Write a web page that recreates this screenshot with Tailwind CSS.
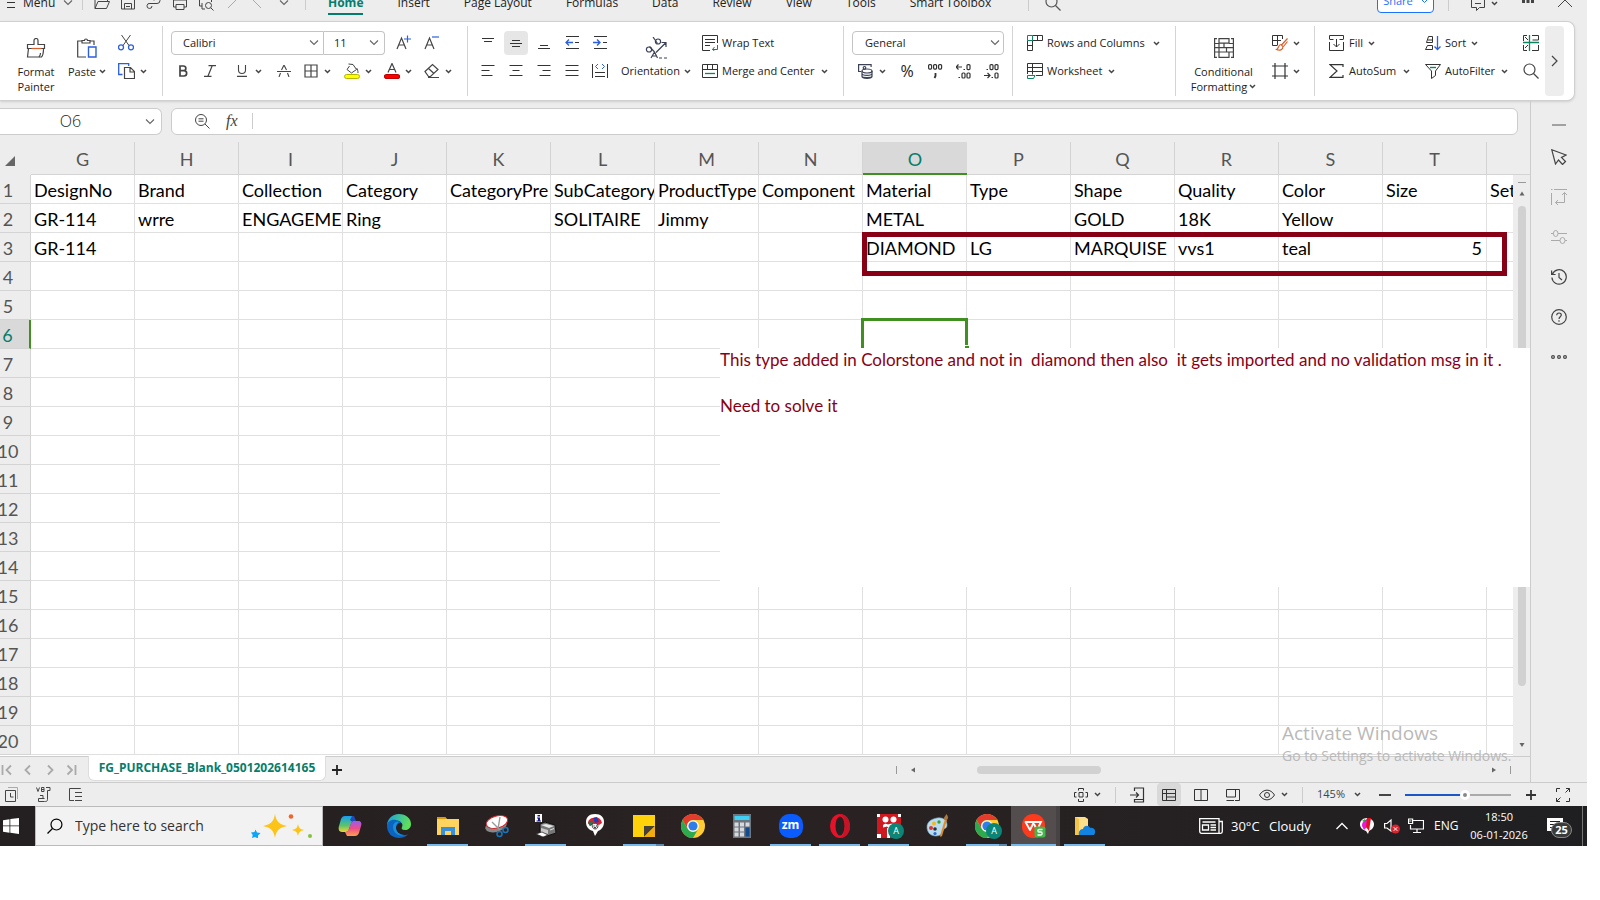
<!DOCTYPE html>
<html lang="en">

<head>
    <meta charset="utf-8">
    <title>FG_PURCHASE_Blank_0501202614165</title>
    <script src="https://cdn.jsdelivr.net/npm/@tailwindcss/browser@4"></script>
</head>

<body class="bg-white font-['Open_Sans',sans-serif] text-[#222] overflow-x-hidden">
    <!-- shared glyphs -->
    <svg class="hidden">
        <symbol id="caret" viewBox="0 0 7 5"><path d="M1 1l2.5 2.5L6 1" fill="none" stroke="#444" stroke-width="1.5"/></symbol>
        <symbol id="chev" viewBox="0 0 10 6"><path d="M1 .5l4 4 4-4" fill="none" stroke="#666" stroke-width="1.1"/></symbol>
        <symbol id="mag" viewBox="0 0 16 16"><circle cx="6.5" cy="6.5" r="5.5" fill="none" stroke="currentColor" stroke-width="1.2"/><path d="M10.5 10.5L15.5 15.5" stroke="currentColor" stroke-width="1.2"/></symbol>
        <symbol id="chrome" viewBox="0 0 24 24">
            <circle cx="12" cy="12" r="12" fill="#fc3"/>
            <path d="M1.6 6A12 12 0 0 1 22.4 6H12a6 6 0 0 0-5.2 9z" fill="#e33b2e"/>
            <path d="M1.6 6A12 12 0 0 0 12 24l5.2-9A6 6 0 0 1 6.8 15z" fill="#2da94f"/>
            <circle cx="12" cy="12" r="5.8" fill="#fff"/><circle cx="12" cy="12" r="4.6" fill="#2f7de9"/>
        </symbol>
    </svg>

    <div class="mr-[13px] bg-[#ededed] flex flex-col">
        <!-- top menu, scrolled half out of view -->
        <header class="h-5 overflow-hidden">
            <div class="-mt-[14px] h-[34px] flex items-center text-xs whitespace-nowrap">
                <button class="flex items-center w-[82px] pl-[7px] shrink-0">
                    <svg class="w-2 h-3 mr-2" viewBox="0 0 8 12" stroke="#333"><path d="M0 1.5h8M0 5.5h8M0 10.5h8"/></svg>Menu
                    <svg class="w-[10px] h-[6px] ml-2"><use href="#chev"/></svg>
                </button>
                <span class="w-px h-[14px] bg-[#ccc]"></span>
                <div class="flex w-[222px] shrink-0 pl-[7px] gap-[2px] text-[#444]">
                    <button class="w-6 flex justify-center" aria-label="Open"><svg class="w-4 h-4" viewBox="0 0 16 16" fill="none" stroke="currentColor"><path d="M1 13.5V2.5h5l1.5 2h6v2M1 13.5l3-7h11.5l-3 7z"/></svg></button>
                    <button class="w-6 flex justify-center" aria-label="Save"><svg class="w-4 h-4" viewBox="0 0 16 16" fill="none" stroke="currentColor"><path d="M1.5 1.5h10l3 3v9.500h-13zM4.500 14V8.500h7V14M6 11.500h4"/></svg></button>
                    <button class="w-6 flex justify-center" aria-label="Export"><svg class="w-4 h-4" viewBox="0 0 16 16" fill="none" stroke="currentColor"><path d="M6 11a2.500 2.500 0 1 1-2-2.500h7a3 3 0 1 0-3-3"/></svg></button>
                    <button class="w-6 flex justify-center" aria-label="Print"><svg class="w-4 h-4" viewBox="0 0 16 16" fill="none" stroke="currentColor"><path d="M4 5V1.500h8V5M4 12H1.500V5h13v7H12M4 9.500h8v5H4z"/></svg></button>
                    <button class="w-6 flex justify-center" aria-label="Preview"><svg class="w-4 h-4" viewBox="0 0 16 16" fill="none" stroke="currentColor"><path d="M4 11H1.500V4h12v3M4 4V1h7v3M4 8v6h3"/><circle cx="10.500" cy="10.500" r="3"/><path d="M12.800 12.800l2.700 2.700"/></svg></button>
                    <button class="w-6 flex justify-center text-[#aaa]" aria-label="Undo"><svg class="w-4 h-4" viewBox="0 0 16 16" fill="none" stroke="currentColor"><path d="M4 13l8-8c0-2-2-4-5-4"/></svg></button>
                    <button class="w-6 flex justify-center text-[#aaa]" aria-label="Redo"><svg class="w-4 h-4" viewBox="0 0 16 16" fill="none" stroke="currentColor"><path d="M11 13L3 5c0-2 2-4 5-4"/></svg></button>
                    <button class="w-6 flex items-center justify-center" aria-label="More"><svg class="w-[10px] h-[6px]"><use href="#chev"/></svg></button>
                </div>
                <span class="w-px h-[14px] bg-[#ccc]"></span>
                <nav class="flex gap-[34px] pl-[22px] w-[722px] shrink-0 self-stretch items-center">
                    <a href="#" class="font-bold text-[#047d6c] self-stretch flex items-center border-b-2 border-[#047d6c] mb-[5px] pt-[7px]">Home</a>
                    <a href="#">Insert</a><a href="#">Page Layout</a><a href="#">Formulas</a><a href="#">Data</a><a href="#">Review</a><a href="#">View</a><a href="#">Tools</a><a href="#">Smart Toolbox</a>
                </nav>
                <span class="w-px h-[16px] bg-[#ccc]"></span>
                <button class="ml-4" aria-label="Search"><svg class="w-4 h-4 text-[#555]"><use href="#mag"/></svg></button>
                <div class="ml-auto flex items-center">
                    <button class="h-6 w-[57px] -mt-1 border border-[#1a73ff] rounded bg-white text-[#1a73ff] text-[11px] flex items-center justify-center gap-2">Share<svg class="w-[7px] h-[5px]" viewBox="0 0 7 5"><path d="M1 1l2.500 2.500L6 1" fill="none" stroke="#1a73ff"/></svg></button>
                    <span class="w-px h-[16px] bg-[#ccc] ml-[14px]"></span>
                    <button class="ml-[22px] flex items-center gap-[5px]" aria-label="Comments"><svg class="w-[15px] h-[15px]" viewBox="0 0 15 15" fill="none" stroke="#444"><path d="M.500 1h13v10.500h-5l-3 3v-3h-5zM4 7.500h6"/></svg><svg class="w-[7px] h-[5px]"><use href="#caret"/></svg></button>
                    <button class="ml-6 w-4" aria-label="More"><svg class="w-3 h-3" viewBox="0 0 12 12" fill="#444"><path d="M0 3h3v3H0zM4.500 3h3v3h-3zM9 3h3v3H9z"/></svg></button>
                    <button class="ml-5 mr-[15px]" aria-label="Collapse"><svg class="w-[14px] h-[14px]" viewBox="0 0 14 14" fill="none" stroke="#444"><path d="M0 11l7-7 7 7"/></svg></button>
                </div>
            </div>
        </header>

        <!-- ribbon -->
        <section class="mt-px mr-3 h-[80px] bg-white border-y border-r border-[#d0d0d0] rounded-r-lg shadow-sm flex text-[11px] whitespace-nowrap text-[#222]">
            <div class="w-[163px] shrink-0 my-1 border-r border-[#d4d4d4] flex pl-[10px]">
                <button class="w-[52px] h-[70px] pt-3 flex flex-col items-center leading-[15px]">
                    <svg class="w-5 h-5 shrink-0 mb-[6px]" viewBox="0 0 20 20" fill="none" stroke="#444" stroke-width="1.200"><path d="M8 6.500V2.500a2 2 0 0 1 4 0v4h6.500v4H1.500v-4zM2.500 10.500L1.500 19h14c1.500-1.500 2-4 2-8.500"/><path d="M5.500 10.500h10" stroke="#d9602b"/><path d="M13 19c1-1 1.500-2.500 1.500-4"/></svg>
                    <span>Format</span><span>Painter</span>
                </button>
                <button class="w-[50px] h-[70px] pt-3 flex flex-col items-center leading-[15px]">
                    <svg class="w-5 h-5 shrink-0 mb-[6px]" viewBox="0 0 20 20" fill="none" stroke="#444" stroke-width="1.200"><path d="M9 19H.700V3H5M13 3h4v4M5 5V2.500h2.500a1.500 1.500 0 0 1 3 0H13V5z"/><path d="M11.500 9h7.500v10h-7.500z" stroke="#2b5fe0" stroke-width="1.400"/></svg>
                    <span class="flex items-center gap-[3px]">Paste<svg class="w-[7px] h-[5px]"><use href="#caret"/></svg></span>
                </button>
                <div class="pt-[3px] pl-[6px]">
                    <button class="h-7 flex items-center" aria-label="Cut"><svg class="w-4 h-4" viewBox="0 0 16 16" fill="none" stroke="#444"><path d="M3.500 0l7.500 10.500M12.500 0L5 10.500"/><g stroke="#2b5fe0" stroke-width="1.300"><circle cx="3" cy="12.300" r="2.500"/><circle cx="13" cy="12.300" r="2.500"/></g></svg></button>
                    <button class="h-7 flex items-center gap-[5px]" aria-label="Copy"><svg class="w-[17px] h-4" viewBox="0 0 17 16" fill="none"><path d="M4.500 11.500H.700V.700h10V3" stroke="#2b5fe0" stroke-width="1.300"/><path d="M6.500 4.500h6l4 4v7h-10zM12 4.500V9h4.500" stroke="#444" stroke-width="1.200"/></svg><svg class="w-[7px] h-[5px]"><use href="#caret"/></svg></button>
                </div>
            </div>
            <div class="w-[305px] shrink-0 my-1 border-r border-[#d4d4d4] pl-2 pt-[3px]">
                <div class="flex items-center h-7">
                    <div class="relative w-[153px]"><select aria-label="Font" class="appearance-none w-full h-6 border border-[#c4c4c4] rounded-l bg-white pl-[11px] text-[11px]"><option>Calibri</option></select><svg class="absolute right-[5px] top-[9px] w-[10px] h-[6px] pointer-events-none"><use href="#chev"/></svg></div>
                    <div class="relative w-[61px]"><select aria-label="Font size" class="appearance-none w-full h-6 border border-l-0 border-[#c4c4c4] rounded-r bg-white pl-[10px] text-[11px]"><option>11</option></select><svg class="absolute right-[6px] top-[9px] w-[10px] h-[6px] pointer-events-none"><use href="#chev"/></svg></div>
                    <button class="w-7 ml-1 flex justify-center" aria-label="Grow font"><svg class="w-[15px] h-4" viewBox="0 0 15 16" fill="none" stroke="#444" stroke-width="1.200"><path d="M1 14L5.500 3 10 14M2.500 10h6"/><path d="M8 4h7M11.500.500v7" stroke="#2b5fe0"/></svg></button>
                    <button class="w-7 flex justify-center" aria-label="Shrink font"><svg class="w-[15px] h-4" viewBox="0 0 15 16" fill="none" stroke="#444" stroke-width="1.200"><path d="M1 14L5.500 3 10 14M2.500 10h6"/><path d="M8 2h7" stroke="#2b5fe0"/></svg></button>
                </div>
                <div class="flex items-center h-7">
                    <button class="w-6 flex justify-center" aria-label="Bold"><svg class="w-3 h-3" viewBox="0 0 12 12" fill="none" stroke="#444" stroke-width="1.700"><path d="M3 1h3.500a2.300 2.300 0 0 1 0 4.700H3zM3 5.700h4a2.600 2.600 0 0 1 0 5.300H3z"/></svg></button>
                    <button class="w-[30px] flex justify-center" aria-label="Italic"><svg class="w-3 h-3" viewBox="0 0 12 12" fill="none" stroke="#444" stroke-width="1.200"><path d="M4.500.600H12M0 11.400h7.500M8.300.600l-4.500 11"/></svg></button>
                    <button class="w-12 flex items-center justify-center gap-2" aria-label="Underline"><svg class="w-[10px] h-3" viewBox="0 0 10 12" fill="none" stroke="#444" stroke-width="1.100"><path d="M1.500 0v5a3.500 3.500 0 0 0 7 0V0M0 11.400h10"/></svg><svg class="w-[7px] h-[5px]"><use href="#caret"/></svg></button>
                    <button class="w-[22px] flex justify-center" aria-label="Strikethrough"><svg class="w-[14px] h-3" viewBox="0 0 14 12" fill="none" stroke="#444" stroke-width="1.100"><path d="M0 6.500h14M4.500 5L7 0l2.500 5M3.500 8L2 12M10.500 8l1.500 4"/></svg></button>
                    <button class="w-[43px] flex items-center justify-center gap-[5px]" aria-label="Borders"><svg class="w-4 h-4" viewBox="0 0 16 16" fill="none" stroke="#444" stroke-width="1.200"><path d="M2 2h12v12H2zM8 2v12M2 8h12"/></svg><svg class="w-[7px] h-[5px]"><use href="#caret"/></svg></button>
                    <button class="w-10 flex items-center justify-center gap-[5px]" aria-label="Fill colour"><svg class="w-4 h-4" viewBox="0 0 16 16" fill="none" stroke="#444"><path d="M5.500 3L3 6.500 7.500 10l5-3.500L9 1.500 4.500 1M12.500 5c1 1 1.500 3 1.500 5"/><rect x=".500" y="11.500" width="15" height="4" rx="2" fill="#ff0" stroke="#b5b500"/></svg><svg class="w-[7px] h-[5px]"><use href="#caret"/></svg></button>
                    <button class="w-10 flex items-center justify-center gap-[5px]" aria-label="Font colour"><svg class="w-4 h-4" viewBox="0 0 16 16" fill="none" stroke="#444" stroke-width="1.200"><path d="M4 9.500L8 .500l4 9M5.500 6.500h5"/><rect x=".500" y="11.500" width="15" height="4" rx="2" fill="red" stroke="#c00000"/></svg><svg class="w-[7px] h-[5px]"><use href="#caret"/></svg></button>
                    <button class="w-10 flex items-center justify-center gap-[5px]" aria-label="Clear"><svg class="w-4 h-4" viewBox="0 0 16 16" fill="none" stroke="#444" stroke-width="1.200"><path d="M1 8.500L8.500 1.500l5.500 5-7.500 7H4.500zM4.500 5.500l5.500 5M4 14.500h11"/></svg><svg class="w-[7px] h-[5px]"><use href="#caret"/></svg></button>
                </div>
            </div>
            <div class="w-[376px] shrink-0 my-1 border-r border-[#d4d4d4] flex pl-[6px] pt-[3px]">
                <div class="w-[140px]">
                    <div class="flex h-7 items-center">
                        <button class="w-7 h-6 flex items-center justify-center" aria-label="Top"><svg class="w-[14px] h-[14px]" viewBox="0 0 14 14" stroke="#333"><path d="M1 2.500h12M3 5.500h8" /></svg></button>
                        <button class="w-7 h-6 flex items-center justify-center" aria-label="Middle"><span class="w-6 h-6 rounded bg-[#e6e6e6] flex items-center justify-center"><svg class="w-[14px] h-[14px]" viewBox="0 0 14 14" stroke="#333"><path d="M3 4.500h8M1 7.500h12M3 10.500h8"/></svg></span></button>
                        <button class="w-7 h-6 flex items-center justify-center" aria-label="Bottom"><svg class="w-[14px] h-[14px]" viewBox="0 0 14 14" stroke="#333"><path d="M3 9.500h8M1 12.500h12"/></svg></button>
                        <button class="w-7 h-6 flex items-center justify-center" aria-label="Decrease indent"><svg class="w-[14px] h-[14px]" viewBox="0 0 14 14" fill="none" stroke="#333"><path d="M1 .500h13M1 12.500h13M10 6.500h4"/><path d="M8 6.500H1M4 3.500l-3 3 3 3" stroke="#2b5fe0" stroke-width="1.300"/></svg></button>
                        <button class="w-7 h-6 flex items-center justify-center" aria-label="Increase indent"><svg class="w-[14px] h-[14px]" viewBox="0 0 14 14" fill="none" stroke="#333"><path d="M1 .500h13M1 12.500h13M10 6.500h4"/><path d="M0 6.500h7M4 3.500l3 3-3 3" stroke="#2b5fe0" stroke-width="1.300"/></svg></button>
                    </div>
                    <div class="flex h-7 items-center">
                        <button class="w-7 flex justify-center" aria-label="Left"><svg class="w-[14px] h-[14px]" viewBox="0 0 14 14" stroke="#333"><path d="M.500 1.500h13M.500 6.500h8M.500 11.500h11"/></svg></button>
                        <button class="w-7 flex justify-center" aria-label="Center"><svg class="w-[14px] h-[14px]" viewBox="0 0 14 14" stroke="#333"><path d="M.500 1.500h13M3.500 6.500h7M.500 11.500h13"/></svg></button>
                        <button class="w-7 flex justify-center" aria-label="Right"><svg class="w-[14px] h-[14px]" viewBox="0 0 14 14" stroke="#333"><path d="M.500 1.500h13M5.500 6.500h8M2.500 11.500h11"/></svg></button>
                        <button class="w-7 flex justify-center" aria-label="Justify"><svg class="w-[14px] h-[14px]" viewBox="0 0 14 14" stroke="#333"><path d="M.500 1.500h13M.500 6.500h13M.500 11.500h13"/></svg></button>
                        <button class="w-7 flex justify-center" aria-label="Distribute"><svg class="w-4 h-[14px]" viewBox="0 0 16 14" fill="none" stroke="#333"><path d="M.500 0v14M15.500 0v14M3 8.500h10M3 12.500h10"/><path d="M6 0L3.500 2.500 6 5M10 0l2.500 2.500L10 5" stroke="#2b5fe0"/></svg></button>
                    </div>
                </div>
                <button class="w-[84px] pt-2 flex flex-col items-center" aria-label="Orientation">
                    <svg class="w-[22px] h-[22px] shrink-0" viewBox="0 0 22 22" fill="none" stroke="#3b4256" stroke-width="1.200"><ellipse cx="4" cy="12.500" rx="2.600" ry="2.500"/><path d="M4.500 9.500l4.500 5"/><ellipse cx="13" cy="4.500" rx="2.600" ry="2.500"/><path d="M8 0l4.500 6.500"/><path d="M11 15.500L20.500 6M16.500 5.500h4.500v4.500M6 21l3.500-6 3 6M7.500 19h4M14 21h3M19 21h3"/></svg>
                    <span class="flex items-center gap-1 mt-1">Orientation<svg class="w-[7px] h-[5px]"><use href="#caret"/></svg></span>
                </button>
                <div class="pl-1">
                    <button class="h-7 flex items-center gap-1"><svg class="w-4 h-4" viewBox="0 0 16 16" fill="none" stroke="#333"><path d="M8 15.500H.500V.500h15V8M3 4.500h10M3 7.500h10M3 10.500h5"/><path d="M15.500 10v4.500H10.500M12.500 12l-2 2.500 2 1.500" stroke="#0a8560"/></svg>Wrap Text</button>
                    <button class="h-7 flex items-center gap-1"><svg class="w-4 h-[14px]" viewBox="0 0 16 14" fill="none" stroke="#333"><path d="M.500.500h15v13H.500zM.500 5.500h15M5.500.500v5M10.500.500v5"/><path d="M3 9.500h10" stroke="#0a8560" stroke-width="1.300"/></svg>Merge and Center<svg class="w-[7px] h-[5px] ml-[3px]"><use href="#caret"/></svg></button>
                </div>
            </div>
            <div class="w-[169px] shrink-0 my-1 border-r border-[#d4d4d4] pl-2 pt-[3px]">
                <div class="flex items-center h-7"><div class="relative w-[152px]"><select aria-label="Number format" class="appearance-none w-full h-6 border border-[#c4c4c4] rounded bg-white pl-[12px] text-[11px]"><option>General</option></select><svg class="absolute right-1 top-[9px] w-[10px] h-[6px] pointer-events-none"><use href="#chev"/></svg></div></div>
                <div class="flex items-center h-7 pl-1">
                    <button class="w-[37px] flex items-center gap-[6px] pl-[2px]" aria-label="Currency"><svg class="w-[15px] h-[15px]" viewBox="0 0 15 15" fill="none" stroke="#3b4256" stroke-width="1.200"><path d="M3 7.500H.600V.600h12.500v2.500"/><circle cx="6.500" cy="3.800" r="1.300"/><ellipse cx="9" cy="7" rx="5" ry="2"/><path d="M4 7v5.500c0 2.500 10 2.500 10 0V7M4 9.500c0 2.500 10 2.500 10 0M4 12c0 2 10 2 10 0"/></svg><svg class="w-[7px] h-[5px]"><use href="#caret"/></svg></button>
                    <button class="w-7 text-base leading-4">%</button>
                    <button class="w-7 flex justify-center" aria-label="Thousands"><svg class="w-[15px] h-[15px]" viewBox="0 0 15 15" fill="none" stroke="#333" stroke-width="1.200"><rect x=".600" y=".600" width="3" height="4.500" rx="1"/><rect x="5.600" y=".600" width="3" height="4.500" rx="1"/><rect x="10.600" y=".600" width="3" height="4.500" rx="1"/><path d="M7.500 9v3l-1 2" stroke-width="1.800"/></svg></button>
                    <button class="w-7 flex justify-center" aria-label="Increase decimal"><svg class="w-[15px] h-[15px]" viewBox="0 0 15 15" fill="none" stroke="#333" stroke-width="1.200"><rect x="11" y=".600" width="3" height="5" rx="1"/><rect x="6" y="9" width="3" height="5" rx="1"/><rect x="11" y="9" width="3" height="5" rx="1"/><path d="M0 3h6M2.500.500L0 3l2.500 2.500M7.500 5.500h1.500M2.500 13.500H4"/></svg></button>
                    <button class="w-7 flex justify-center" aria-label="Decrease decimal"><svg class="w-[15px] h-[15px]" viewBox="0 0 15 15" fill="none" stroke="#333" stroke-width="1.200"><rect x="6" y=".600" width="3" height="5" rx="1"/><rect x="11" y=".600" width="3" height="5" rx="1"/><rect x="11" y="9" width="3" height="5" rx="1"/><path d="M0 11.500h6M3.500 9L6 11.500 3.500 14M7.500 13.500H9M2.500 5.500H4"/></svg></button>
                </div>
            </div>
            <div class="w-[163px] shrink-0 my-1 border-r border-[#d4d4d4] pl-[14px] pt-[3px]">
                <button class="h-7 flex items-center gap-1"><svg class="w-4 h-4" viewBox="0 0 16 16" fill="none" stroke="#333"><path d="M5.500.500h10v5h-10M10.500.500v5M.500 5.500v10h5v-10M.500 10.500h5"/><path d="M.500.500h5v5h-5z" stroke="#0a8560"/></svg>Rows and Columns<svg class="w-[7px] h-[5px] ml-1"><use href="#caret"/></svg></button>
                <button class="h-7 flex items-center gap-1"><svg class="w-4 h-4" viewBox="0 0 16 16" fill="none" stroke="#333"><path d="M.500 11V.500h15v12H9M.500 4.500h15M5.500.500v11M.500 8.500h15"/><path d="M.500 12.500H8L6.500 15.500h-6z" stroke="#0a8560"/></svg>Worksheet<svg class="w-[7px] h-[5px] ml-[2px]"><use href="#caret"/></svg></button>
            </div>
            <div class="w-[139px] shrink-0 my-1 border-r border-[#d4d4d4] flex pl-[8px]">
                <button class="w-[79px] h-[70px] pt-3 flex flex-col items-center leading-[15px]">
                    <svg class="w-5 h-5 shrink-0 mb-[6px]" viewBox="0 0 20 20" fill="none" stroke="#444" stroke-width="1.200"><path d="M3 .600H.600v18.800H3M17 .600h2.400v18.800H17M5 .600h10v4.500H5zM5 14h10v5.400H5zM.600 5.500H5M.600 9.700h18.800M.600 14H5M15 5.500h4.400M15 14h4.400M5 5v9M10 5v5M12.500 10v4"/></svg>
                    <span>Conditional</span><span class="flex items-center gap-[2px]">Formatting<svg class="w-[7px] h-[5px]"><use href="#caret"/></svg></span>
                </button>
                <div class="pt-[3px] pl-[9px]">
                    <button class="h-7 flex items-center gap-[5px]" aria-label="Table style"><svg class="w-4 h-4" viewBox="0 0 16 16" fill="none" stroke="#333"><path d="M5 10.500H.500V.500h10V4M.500 5.500H9M5.500.500v10"/><path d="M15.500 3.500l-6 6.500M15.500 6.500l-4 5M9 9.500c-3 0-2 4-4.500 5 3 1.500 6.500.500 6.500-3z" stroke="#d9602b" stroke-width="1.200"/></svg><svg class="w-[7px] h-[5px]"><use href="#caret"/></svg></button>
                    <button class="h-7 flex items-center gap-[5px]" aria-label="Cell style"><svg class="w-4 h-4" viewBox="0 0 16 16" fill="none" stroke="#333" stroke-width="1.200"><path d="M0 3h16M0 13h16M3 0v16M13 0v16"/></svg><svg class="w-[7px] h-[5px]"><use href="#caret"/></svg></button>
                </div>
            </div>
            <div class="my-1 flex pl-[14px] pt-[3px] grow">
                <div class="w-24">
                    <button class="h-7 flex items-center gap-[5px]"><svg class="w-[15px] h-4" viewBox="0 0 15 16" fill="none" stroke="#333"><path d="M.500 4V.500h14V4M.500 4.500h4M10.500 4.500h4M.500 7v8.500h14V7M7.500 4v8M4.500 9l3 3 3-3"/></svg>Fill<svg class="w-[7px] h-[5px]"><use href="#caret"/></svg></button>
                    <button class="h-7 flex items-center gap-[5px]"><svg class="w-[15px] h-4" viewBox="0 0 15 16" fill="none" stroke="#333" stroke-width="1.200"><path d="M14 4V1.600H1L8 8l-7 6.400h13V12"/></svg>AutoSum<svg class="w-[7px] h-[5px] ml-[2px]"><use href="#caret"/></svg></button>
                </div>
                <div class="w-[98px]">
                    <button class="h-7 flex items-center gap-1"><svg class="w-4 h-4" viewBox="0 0 16 16" fill="none" stroke="#333"><path d="M3.500 1.500h4v6h-6zM.500 14.500l2-4h5v4zM3 5h4.500"/><path d="M12.500 1v13.500M9.500 11.500l3 3 3-3" stroke="#2b5fe0" stroke-width="1.300"/></svg>Sort<svg class="w-[7px] h-[5px] ml-px"><use href="#caret"/></svg></button>
                    <button class="h-7 flex items-center gap-1"><svg class="w-4 h-4" viewBox="0 0 16 16" fill="none" stroke="#333"><path d="M.500 1.500h15L10.500 8v4.500l-4 3V8z"/><path d="M5 4.500h6" stroke="#0a8560" stroke-width="1.400"/></svg>AutoFilter<svg class="w-[7px] h-[5px] ml-[2px]"><use href="#caret"/></svg></button>
                </div>
                <div>
                    <button class="h-7 flex items-center" aria-label="Freeze"><svg class="w-4 h-4" viewBox="0 0 16 16" fill="none" stroke="#333"><path d="M4 .500H.500V6M9 .500h6.500V5h-6M.500 10v5.500H4M9 15.500h6.500V10M2 2l3 3M2 13l3-3"/><path d="M6.500 0v16M0 7.500h16" stroke="#0a8560" stroke-width="1.300"/></svg></button>
                    <button class="h-7 flex items-center" aria-label="Find"><svg class="w-4 h-4 text-[#444]"><use href="#mag"/></svg></button>
                </div>
            </div>
            <button class="w-[19px] my-1 mr-[10px] bg-[#ededed] rounded flex items-center justify-center" aria-label="Scroll ribbon"><svg class="w-[7px] h-3" viewBox="0 0 7 12" fill="none" stroke="#444" stroke-width="1.200"><path d="M1 1l5 5-5 5"/></svg></button>
        </section>

        <main class="flex">
            <div class="grow min-w-0">
                <!-- name box and formula bar -->
                <div class="h-[41px] pr-3 pb-px flex items-center gap-[9px]">
                    <div class="relative w-[162px] shrink-0">
                        <input aria-label="Name box" value="O6" class="w-full h-[27px] bg-white border border-l-0 border-[#ccc] rounded-r-md text-center text-base pr-5 font-['Open_Sans',sans-serif] font-light">
                        <svg class="absolute right-[7px] top-[11px] w-[10px] h-[6px] pointer-events-none"><use href="#chev"/></svg>
                    </div>
                    <div class="grow h-[27px] bg-white border border-[#ccc] rounded-md flex items-center pl-[23px] text-[#444]">
                        <svg class="w-[15px] h-[15px]" viewBox="0 0 15 15" fill="none" stroke="currentColor"><circle cx="6" cy="6" r="5.500"/><path d="M10 10l4.500 4.500M3.500 4.800h5M3.500 7.200h5"/></svg>
                        <span class="ml-4 w-[18px] text-base italic font-['Liberation_Serif',serif]">fx</span>
                        <span class="w-px h-4 bg-[#ccc] ml-[8px]"></span>
                        <input aria-label="Formula" class="grow h-5 px-2 text-sm outline-none">
                    </div>
                </div>

                <!-- sheet -->
                <div class="relative h-[614px] flex overflow-hidden">
                    <div class="grow min-w-0 overflow-hidden bg-white">
                        <table class="-ml-[14px] w-[1605px] table-fixed border-separate border-spacing-0 font-['Lato',sans-serif] text-[18px] leading-6 text-black">
                            <thead><tr id="cols"></tr></thead>
                            <tbody id="rows"></tbody>
                        </table>
                    </div>
                    <div class="w-[17px] shrink-0 pt-[33px] flex flex-col items-center">
                        <div class="absolute top-0 right-0 w-[17px] h-[33px] bg-[#ededed] border-b border-[#d4d4d4]"></div>
                        <svg class="w-2 h-7" viewBox="0 0 8 28"><path d="M0 7.500h8" stroke="#999"/><path d="M1.500 20.500L4 16.500l2.500 4z" fill="#666"/></svg>
                        <div class="w-2 h-[480px] mt-[3px] rounded bg-[#d1d1d1]"></div>
                        <svg class="w-2 h-2 mt-auto mb-[7px]" viewBox="0 0 8 8"><path d="M1.500 2L4 6l2.500-4z" fill="#666"/></svg>
                    </div>
                    <div class="absolute left-[862px] top-[90px] w-[645px] h-[44px] border-[5px] border-[#880015]"></div>
                    <div class="absolute left-[720px] right-0 top-[206px] h-[239px] bg-white text-[#880015] font-['Lato',sans-serif] text-[17px] leading-[23px] whitespace-pre overflow-hidden"><p>This type added in Colorstone and not in  diamond then also  it gets imported and no validation msg in it .</p><br><p>Need to solve it</p></div>
                    <p class="absolute left-[1282px] top-[579px] text-[#b9b9b9] text-[19px] leading-6 z-10 whitespace-nowrap pointer-events-none">Activate Windows</p>
                </div>

                <!-- sheet tabs -->
                <div class="relative h-[26px] border-t border-[#ccc] flex items-center text-[#aaa]">
                    <div class="w-[88px] shrink-0 flex items-center">
                        <svg class="w-[88px] h-4" viewBox="0 0 88 16" fill="none" stroke="#aaa" stroke-width="1.800"><path d="M2.500 3v10M11 3.500L6.500 8l4.500 4.500M30 3.500L25.500 8l4.500 4.500M48 3.500L52.500 8 48 12.500M67.500 3.500L72 8l-4.500 4.500M75.500 3v10"/></svg>
                    </div>
                    <button class="h-[25px] -mt-px w-[238px] self-start bg-white border border-t-0 border-[#ddd] rounded-b-md font-bold text-xs text-[#047d6c] whitespace-nowrap">FG_PURCHASE_Blank_0501202614165</button>
                    <button class="ml-[6px]" aria-label="New sheet"><svg class="w-[10px] h-[10px]" viewBox="0 0 10 10" stroke="#222" stroke-width="1.800"><path d="M5 0v10M0 5h10"/></svg></button>
                    <div class="ml-auto mr-[19px] flex items-center">
                        <span class="w-px h-2 bg-[#999]"></span>
                        <svg class="w-2 h-2 ml-3" viewBox="0 0 8 8"><path d="M6 1.500L2 4l4 2.500z" fill="#666"/></svg>
                        <span class="w-[124px] h-2 rounded bg-[#d1d1d1] ml-[60px] mr-[389px]"></span>
                        <svg class="w-2 h-2 mr-3" viewBox="0 0 8 8"><path d="M2 1.500L6 4 2 6.500z" fill="#666"/></svg>
                        <span class="w-px h-2 bg-[#999]"></span>
                    </div>
                    <p class="absolute left-[1282px] -top-[11px] text-[#b9b9b9] text-sm leading-5 whitespace-nowrap pointer-events-none z-10">Go to Settings to activate Windows.</p>
                </div>
            </div>

            <!-- side tools -->
            <aside class="w-[57px] shrink-0 border-l border-[#ccc] flex flex-col items-center text-[#444]">
                <button class="h-8 mt-2" aria-label="Collapse panel"><svg class="w-4 h-4" viewBox="0 0 16 16"><path d="M1 8h14" stroke="#999" stroke-width="1.800"/></svg></button>
                <button class="h-8 mb-1" aria-label="Select"><svg class="w-4 h-4" viewBox="0 0 16 16" fill="none" stroke="currentColor" stroke-width="1.200"><path d="M.800.800L4.500 15l3-4 4 4.500 3-3-4-4 4.500-2.500z"/></svg></button>
                <button class="h-10 text-[#aaa]" aria-label="Crop"><svg class="w-4 h-4" viewBox="0 0 16 16" fill="none" stroke="currentColor"><path d="M.500 4v12M3 .500h13M0 .500h1.500M13.500 3.500v10h-9M11 6l2.500-2.500L16 6M7 11l-2.500 2.500L7 16"/></svg></button>
                <button class="h-10 text-[#aaa]" aria-label="Settings"><svg class="w-4 h-4" viewBox="0 0 16 16" fill="none" stroke="currentColor"><path d="M0 4.500h2.500M7 4.500h9M0 11.500h9M14 11.500h2"/><ellipse cx="4.700" cy="4.500" rx="2.300" ry="3"/><ellipse cx="11.500" cy="11.500" rx="2.500" ry="3"/></svg></button>
                <button class="h-10" aria-label="History"><svg class="w-4 h-4" viewBox="0 0 16 16" fill="none" stroke="currentColor" stroke-width="1.200"><path d="M1.500 5A7.200 7.200 0 1 1 .900 8.500M.600 1.500V5.500h4M8 4v4.500l3 2.500"/></svg></button>
                <button class="h-10" aria-label="Help"><svg class="w-4 h-4" viewBox="0 0 16 16" fill="none" stroke="currentColor" stroke-width="1.200"><circle cx="8" cy="8" r="7.300"/><path d="M5.700 6.300c0-3 4.600-3 4.600-.300C10.300 7.800 8 7.800 8 10M8 11.300v1.400"/></svg></button>
                <button class="h-10" aria-label="More tools"><svg class="w-4 h-4" viewBox="0 0 16 16" fill="none" stroke="currentColor" stroke-width="1.200"><circle cx="2" cy="8" r="1.400"/><circle cx="8" cy="8" r="1.400"/><circle cx="14" cy="8" r="1.400"/></svg></button>
            </aside>
        </main>

        <!-- status bar -->
        <div class="h-6 border-t border-[#ccc] flex items-center text-[11px] text-[#444]">
            <div class="flex items-center gap-[17px] pl-1">
                <svg class="w-[15px] h-[15px]" viewBox="0 0 15 15" fill="none" stroke="#444"><path d="M1.500 3.500h10v11h-10zM6.500 6v4h3"/><path d="M4 .500h9.500V12" stroke="#aaa"/></svg>
                <svg class="w-[15px] h-[15px]" viewBox="0 0 15 15" fill="none" stroke="#444"><path d="M.500.500l1.500 4 1.500-4M5.500.500v4h2.500v-4zM5.500 2.500H8M10 .500h4v3h-2.500v9c0 2-1.500 2-3 2h-6v-3h6M4 8.500h3v3"/></svg>
                <svg class="w-[15px] h-[15px]" viewBox="0 0 15 15" fill="none" stroke="#444"><path d="M12.500 2V1.500h-11v12H6M7 5.500h7M7 9.500h7M7 13.500h7"/></svg>
            </div>
            <div class="ml-auto flex items-center h-full">
                <button class="flex items-center gap-[5px]" aria-label="Mode"><svg class="w-4 h-4" viewBox="0 0 16 16" fill="none" stroke="#333"><path d="M6 5.500h4v4.500H6zM5.500 3.500v-2h5v2M5.500 12v2.500h5V12M3.500 5.500h-2v4.500h2M12.500 5.500h2v4.500h-2"/></svg><svg class="w-[7px] h-[5px]"><use href="#caret"/></svg></button>
                <span class="w-px h-4 bg-[#ccc] mx-[14px]"></span>
                <button class="w-4 mr-[11px]" aria-label="Mobile"><svg class="w-4 h-4" viewBox="0 0 16 16" fill="none" stroke="#333" stroke-width="1.200"><path d="M4.500 4V1h9v14h-9v-3M4 12.500h9M0 8h8.500M6 5.500L8.500 8 6 10.500"/></svg></button>
                <button class="w-6 h-full bg-[#d9d9d9] rounded flex items-center justify-center" aria-label="Normal view"><svg class="w-[14px] h-[14px]" viewBox="0 0 14 14" fill="none" stroke="#333"><path d="M.500 1.500h13v11H.500zM.500 5.500h13M4.500 1.500v11M4.500 9h9"/></svg></button>
                <button class="w-8 ml-1 flex justify-center" aria-label="Page view"><svg class="w-[14px] h-[14px]" viewBox="0 0 14 14" fill="none" stroke="#333"><path d="M.500 1.500h13v11H.500zM7 1.500v11"/></svg></button>
                <button class="w-8 flex justify-center" aria-label="Break view"><svg class="w-[14px] h-[14px]" viewBox="0 0 14 14" fill="none" stroke="#333"><path d="M.500 1.500h13v11H9M.500 1.500V9h9V1.500M.500 12.500H8"/></svg></button>
                <button class="ml-[10px] flex items-center gap-[6px]" aria-label="Eye care"><svg class="w-4 h-4" viewBox="0 0 16 16" fill="none" stroke="#333"><path d="M.500 8C4.500 1.500 11.500 1.500 15.500 8 11.500 14.500 4.500 14.500.500 8z"/><circle cx="8" cy="8" r="2.500"/></svg><svg class="w-[7px] h-[5px]"><use href="#caret"/></svg></button>
                <span class="w-px h-4 bg-[#ccc] mx-[14px]"></span>
                <button class="flex items-center gap-[9px]">145%<svg class="w-[7px] h-[5px]"><use href="#caret"/></svg></button>
                <button class="ml-[18px]" aria-label="Zoom out"><svg class="w-3 h-3" viewBox="0 0 12 12"><path d="M0 6h12" stroke="#333" stroke-width="1.800"/></svg></button>
                <input type="range" aria-label="Zoom" value="57" class="appearance-none w-[106px] h-[2px] ml-[14px] bg-linear-to-r from-[#1c56c8] from-57% to-[#aaa] to-57% [&::-webkit-slider-thumb]:appearance-none [&::-webkit-slider-thumb]:w-[10px] [&::-webkit-slider-thumb]:h-[10px] [&::-webkit-slider-thumb]:rounded-full [&::-webkit-slider-thumb]:bg-[#888] [&::-webkit-slider-thumb]:border-[3px] [&::-webkit-slider-thumb]:border-white">
                <button class="ml-[14px]" aria-label="Zoom in"><svg class="w-3 h-3" viewBox="0 0 12 12"><path d="M1 6h10M6 1v10" stroke="#333" stroke-width="1.800"/></svg></button>
                <button class="ml-[19px] mr-[17px]" aria-label="Full screen"><svg class="w-[14px] h-[14px]" viewBox="0 0 14 14" fill="none" stroke="#333"><path d="M.500 4V.500H4M10 .500h3.500V4M13.500 .500L9.500 4.500M.500 10v3.500H4M.500 13.500l4-4M13.500 10v3.500H10"/></svg></button>
            </div>
        </div>

        <!-- taskbar -->
        <footer class="h-10 bg-linear-to-r from-[#241f20] via-[#2a2222] to-[#1f1f21] flex items-center text-white">
            <button class="w-[35px] h-full flex items-center" aria-label="Start"><svg class="w-4 h-4 ml-[3px]" viewBox="0 0 16 16" fill="#fff"><path d="M0 2.200l6.500-1v6.300H0zM7.300 1.100L16 0v7.500H7.300zM0 8.300h6.500v6.400L0 13.700zM7.300 8.300H16V16l-8.700-1.200z"/></svg></button>
            <div class="w-[288px] h-full shrink-0 bg-[#f2f2f2] border border-[#bbb] flex items-center pl-[11px] text-black">
                <svg class="w-4 h-4 -scale-x-100"><use href="#mag"/></svg>
                <input type="search" aria-label="Search" placeholder="Type here to search" class="grow min-w-0 pl-3 text-sm placeholder:text-[#333]">
                <svg class="w-[62px] h-6 mr-[9px] shrink-0" viewBox="0 0 62 24"><path d="M24 0c1.500 8 4 10 12 12-8 2-10.500 4-12 12-1.500-8-4-10-12-12 8-2 10.500-4 12-12z" fill="#fcc419"/><path d="M47 10c.800 4 2 5 6 6-4 1-5.200 2-6 6-.800-4-2-5-6-6 4-1 5.200-2 6-6z" fill="#fcc419"/><path d="M4.500 15.500l1.500 3 3.500.500-2.500 2.500v3l-3-1.500-3 1 .700-3-1.700-2.500 3.500-.500z" fill="#0ea5f5"/><circle cx="40" cy="2.500" r="2.300" fill="#f0652b"/><circle cx="59" cy="22" r="2" fill="#84c341"/></svg>
            </div>
            <div class="flex h-full ml-[2px]">
                <button class="w-[49px] flex items-center justify-center" aria-label="Copilot"><svg class="w-6 h-6" viewBox="0 0 24 24"><defs><linearGradient id="cpA" x1="0" y1="0" x2="0" y2="1"><stop stop-color="#13a0f0"/><stop offset=".6" stop-color="#5cc36a"/><stop offset="1" stop-color="#f5d431"/></linearGradient><linearGradient id="cpB" x1="0" y1="0" x2="0" y2="1"><stop stop-color="#9a5cf0"/><stop offset=".5" stop-color="#ee4d8a"/><stop offset="1" stop-color="#fba04d"/></linearGradient></defs><path d="M7 2h8l3 6-4-1-3 8c-1 3-2 3-5 3H4c-3 0-4-3-3-6l2-7c1-2 2-3 4-3z" fill="url(#cpA)"/><path d="M14 2h2l2 5h-5l-1-1z" fill="#2348b8"/><path d="M17 7h3c3 0 4 2 3 5l-2 7c-1 2-2 3-4 3H9l-2-4c2 0 3-1 4-3l2-6c1-2 2-2 4-2z" fill="url(#cpB)"/></svg></button>
                <button class="w-[49px] flex items-center justify-center" aria-label="Edge"><svg class="w-6 h-6" viewBox="0 0 24 24"><defs><linearGradient id="ed" x1="0" y1="0" x2="1" y2=".3"><stop stop-color="#1b9de2"/><stop offset="1" stop-color="#5fe05a"/></linearGradient></defs><path d="M0 12C0 5 5 0 12 0s12 4.500 12 10c0 4-3 6-6 6s-4-1-3-3c1.500-3-1-6-5-6C5 7 1 9 0 12z" fill="url(#ed)"/><path d="M0 12c0-4 4-7 9-6 3 .500 5 2 5 3-3 0-5 2-5 5 0 4 4 7 8 7 2 0 4-.500 5-1.500C20 22 16 24 12 24 5 24 0 19 0 12z" fill="#0c64c0"/><path d="M6 13c0-4 3-6 6-5-2 1-3 3-3 6 0 4 4 7 8 7-5 2-11-2-11-8z" fill="#1490df"/></svg></button>
                <button class="w-[49px] flex flex-col items-center justify-center relative" aria-label="Explorer"><svg class="w-[22px] h-5" viewBox="0 0 22 20"><path d="M0 1h8l2 2h12v16H0z" fill="#ffd45e"/><path d="M0 1h8l1.500 2H0z" fill="#d99b0c"/><path d="M4 19v-8h14v8h-4v-4H8v4z" fill="#3b8fd6"/></svg><span class="absolute bottom-0 inset-x-1 h-[2px] bg-[#76b9ed]"></span></button>
                <button class="w-[49px] flex items-center justify-center" aria-label="Snipping"><svg class="w-6 h-6" viewBox="0 0 24 24"><ellipse cx="11" cy="12" rx="11" ry="6" fill="#888" transform="rotate(-15 11 12)"/><ellipse cx="12" cy="8" rx="11" ry="6" fill="#fff" stroke="#d8232a" transform="rotate(-15 12 8)"/><path d="M7 8l8 8M15 3l-2 12" stroke="#999" stroke-width="1.400"/><g fill="none" stroke="#1478c0" stroke-width="1.500"><circle cx="14.500" cy="20" r="2.500"/><circle cx="20.500" cy="16" r="2.500"/></g></svg></button>
                <button class="w-[49px] flex items-center justify-center relative" aria-label="Scanner"><svg class="w-6 h-6" viewBox="0 0 24 24"><path d="M6 10l5-2 10 3 1 8-9 3-7-3z" fill="#777" stroke="#111"/><path d="M7 11l5-1 8 2-5 2z" fill="#e6e6e6"/><path d="M7 14l7 2v4l-7-2z" fill="#c9c9c9"/><path d="M2 20l6-2 6 3-5 2z" fill="#fff" stroke="#222" stroke-width=".7"/><path d="M16 16l4-1.500" stroke="#ddd"/><path d="M1 0h7v8H1z" fill="#fff"/><path d="M3.500 1h2.500v1.500H3.500zM3 3.500h3V6.500h1v1H2.500v-1h1.500v-2H3z" fill="#15158c"/></svg><span class="absolute bottom-0 inset-x-1 h-[2px] bg-[#76b9ed]"></span></button>
                <button class="w-[49px] flex items-center justify-center" aria-label="Jester"><svg class="w-6 h-6" viewBox="0 0 24 24"><path d="M12 0c6 0 9 3.500 9 8 0 5-3 8-6 9l-3 5-2-5c-4-1-7-4-7-9 0-4.500 3-8 9-8z" fill="#fff"/><path d="M5 9c0-3 3-5 5-5 4-2 8 0 9 5l-3 2-5-2-4 3z" fill="#e0202a"/><path d="M10 4l4-1 2 5-4 1z" fill="#1d3fb5"/><path d="M5 9l4-3 1 4-3 2z" fill="#1c7a58"/><path d="M9 10c2-1 5-1 6 1 0 3-1 4-3 4s-3-2-3-5z" fill="#eee" stroke="#222" stroke-width=".8"/><path d="M10.500 12h1M13 12h1M11 13.700h2" stroke="#222"/></svg></button>
                <button class="w-[49px] flex items-center justify-center relative" aria-label="Notes"><svg class="w-[22px] h-6" viewBox="0 0 22 24"><path d="M0 1h22v22H0z" fill="#fdd20a"/><path d="M11 23V12h11z" fill="#45403a"/><path d="M11 23l11-11v11z" fill="#f2ad0c"/></svg><span class="absolute bottom-0 inset-x-1 h-[2px] bg-[#76b9ed] border-r-8 border-[#5c88ad]"></span></button>
                <button class="w-[49px] flex items-center justify-center" aria-label="Chrome"><svg class="w-6 h-6"><use href="#chrome"/></svg></button>
                <button class="w-[49px] flex items-center justify-center" aria-label="Calculator"><svg class="w-[18px] h-6" viewBox="0 0 18 24"><path d="M0 0h18v24H0z" fill="#6d757d"/><path d="M1.500 2h15v4h-15z" fill="#3fd0f5"/><path d="M1.500 8.500h4v4h-4zM7 8.500h4v4H7zM12.500 8.500h4v4h-4zM1.500 13.500h4v4h-4zM7 13.500h4v4H7zM1.500 18.500h4v4h-4zM7 18.500h4v4H7z" fill="#d5dade"/><path d="M12.500 13.500h4v9h-4z" fill="#104a90"/></svg></button>
                <button class="w-[49px] flex items-center justify-center relative" aria-label="Zoom"><span class="w-6 h-6 rounded-[10px] bg-[#0b5cff] text-[12px] leading-[22px] font-bold">zm</span><span class="absolute bottom-0 inset-x-1 h-[2px] bg-[#76b9ed]"></span></button>
                <button class="w-[49px] flex items-center justify-center relative" aria-label="Opera"><svg class="w-6 h-6" viewBox="0 0 24 24"><ellipse cx="12" cy="12" rx="10" ry="12" fill="#e8112a"/><path d="M12 0c6 0 10 5 10 12s-4 12-10 12c3-1 5-6 5-12S15 1 12 0z" fill="#c41527"/><ellipse cx="12" cy="12" rx="4.500" ry="9.500" fill="#252021"/></svg><span class="absolute bottom-0 inset-x-1 h-[2px] bg-[#76b9ed]"></span></button>
                <button class="w-[49px] flex items-center justify-center relative" aria-label="Team"><svg class="w-6 h-6" viewBox="0 0 24 24"><path d="M0 0h24v24H0z" fill="#cf1820"/><path d="M0 0h3v3H0zM21 0h3v3h-3zM0 20h4v4H0zM10 14h3v10h-3z" fill="#fff"/><circle cx="8.500" cy="5.500" r="3" fill="#fff"/><circle cx="16.500" cy="5.500" r="3" fill="#fff"/><path d="M6 11c2-1.500 3-1.500 5-.500 2-1 6-1 8 1l-1 3h-6l-2-2-4 1z" fill="#fff"/></svg><span class="absolute left-[24px] top-[17px] w-4 h-4 rounded-full bg-[#0b8577] text-[9px] leading-4">A</span><span class="absolute bottom-0 inset-x-1 h-[2px] bg-[#76b9ed]"></span></button>
                <button class="w-[49px] flex items-center justify-center" aria-label="Paint"><svg class="w-6 h-6" viewBox="0 0 24 24"><path d="M11 4c6-1 10 2 10 7 0 4-3 3-4 5-1 3-2 6-7 6-6 0-9-4-9-9s4-8 10-9z" fill="#b9dcee" stroke="#7aa6c0" stroke-width=".600"/><circle cx="5" cy="14" r="2" fill="#d33"/><circle cx="8" cy="9.500" r="2" fill="#f5b81c"/><circle cx="13" cy="8" r="1.700" fill="#3a9d3a"/><circle cx="9" cy="15" r="1.800" fill="#26323c"/><circle cx="9" cy="19.500" r="1.600" fill="#2b6bd0"/><path d="M19 5l2 1-5 16c-1 1-2 1-2 0z" fill="#e08a2a"/><path d="M18 5c0-3 2-3 2-5 3 2 2 5 1 6z" fill="#a87842"/></svg></button>
                <button class="w-[49px] flex items-center justify-center relative" aria-label="Chrome profile"><svg class="w-6 h-6"><use href="#chrome"/></svg><span class="absolute left-[24px] top-[17px] w-4 h-4 rounded-full bg-[#0b8577] text-[9px] leading-4">A</span><span class="absolute bottom-0 inset-x-1 h-[2px] bg-[#76b9ed] border-r-8 border-[#5c88ad]"></span></button>
                <button class="w-[49px] flex items-center justify-center relative bg-[#534d4e] border-r-4 border-[#474243]" aria-label="WPS"><svg class="w-6 h-6" viewBox="0 0 24 24"><rect width="23" height="24" rx="11" fill="#fb3b1e"/><path d="M3.500 8H12L8 16z" fill="none" stroke="#fff" stroke-width="1.800" stroke-linejoin="round"/><path d="M12 8h7l-2.500 5M12 10l2 4" fill="none" stroke="#fff" stroke-width="1.800"/><rect x="12.500" y="12.500" width="11" height="11" rx="2" fill="#44b549"/><path d="M20.500 15.500h-3.500c-1.500 0-1.500 2.500 0 2.500h2c1.500 0 1.500 3 0 3h-3.500" fill="none" stroke="#fff" stroke-width="1.300"/></svg><span class="absolute bottom-0 inset-x-0 h-[2px] bg-[#76b9ed]"></span></button>
                <button class="w-[49px] flex items-center justify-center relative" aria-label="OneDrive"><svg class="w-5 h-5" viewBox="0 0 20 20"><path d="M0 1h10l3 2v16H0z" fill="#ffe08a"/><path d="M0 1l4 2v16H0z" fill="#f5c348"/><path d="M4 19c-1-3 1-6 4-6 1-4 6-4 7-1 4-1 7 3 4 7z" fill="#1283e0"/></svg><span class="absolute bottom-0 inset-x-1 h-[2px] bg-[#76b9ed]"></span></button>
            </div>
            <div class="ml-auto flex items-center h-full text-sm whitespace-nowrap">
                <svg class="w-6 h-4" viewBox="0 0 24 16" fill="none" stroke="#fff" stroke-width="1.300"><path d="M.700.700H20v14.600H2.500c-1 0-1.800-.800-1.800-2zM20 3.500h3.300v10c0 1-.500 1.800-1.500 1.800H19M3.500 4h13M3.500 7h6v5h-6zM11.500 7h5.500M11.500 9.500h5.500M11.500 12h5.500"/></svg>
                <span class="ml-2 w-[38px] text-[13px]">30°C</span><span class="w-[67px] text-[13px]">Cloudy</span>
                <button class="w-6" aria-label="Show hidden icons"><svg class="w-3 h-2" viewBox="0 0 12 8" fill="none" stroke="#fff" stroke-width="1.300"><path d="M.500 7L6 1.500 11.500 7"/></svg></button>
                <svg class="w-[14px] h-4" viewBox="0 0 14 16"><path d="M7 0c4 0 7 3 7 6 0 4-3 6-5 7l-1 3-2-3C3 12 0 10 0 6c0-3 3-6 7-6z" fill="#fff"/><path d="M2 8c0-4 2-6 5-7v8l-3 3z" fill="#e41ad8"/><path d="M7 0h4L9 13 6 9z" fill="#e3101c"/><path d="M2 3l3-2v3z" fill="#28a745"/></svg>
                <svg class="w-4 h-4 ml-[10px]" viewBox="0 0 16 16"><path d="M.600 5.500H3L7 2v11L3 10H.600z" fill="none" stroke="#fff" stroke-width="1.200"/><circle cx="11.500" cy="11" r="4.500" fill="#d9232e"/><path d="M9.700 9.200l3.600 3.600M13.300 9.200l-3.600 3.600" stroke="#fff"/></svg>
                <svg class="w-4 h-4 ml-2" viewBox="0 0 16 16" fill="none" stroke="#fff" stroke-width="1.200"><path d="M5 2.500h10.500v8.500H2.500V7M9 11v3.500M5 14.500h8M.600 1h4v4.500h-4zM1.500 3h2"/></svg>
                <span class="ml-[10px] text-xs w-[35px]">ENG</span>
                <time class="w-[60px] text-center text-[11px] leading-[18px]">18:50<br>06-01-2026</time>
                <button class="relative w-7 h-6 ml-[18px] mr-[7px]" aria-label="Notifications"><svg class="w-4 h-4" viewBox="0 0 16 16"><path d="M0 0h16v13h-6l-3 3v-3H0z" fill="#fff"/><path d="M3 3.500h10M3 6.500h10M3 9.500h6" stroke="#222"/></svg><span class="absolute left-[4px] top-[8px] w-[21px] h-4 rounded-full bg-[#3b3b3b] border border-[#888] text-[11px] leading-[14px] font-bold">25</span></button>
                <span class="w-px h-full bg-[#777] mr-1"></span>
            </div>
        </footer>
    </div>
</body>
<script>
    const letters = ["G", "H", "I", "J", "K", "L", "M", "N", "O", "P", "Q", "R", "S", "T", ""]
    const cells = {
        1: ["DesignNo", "Brand", "Collection", "Category", "CategoryPre", "SubCategory", "ProductType", "Component", "Material", "Type", "Shape", "Quality", "Color", "Size", "Set"],
        2: ["GR-114", "wrre", "ENGAGEME", "Ring", "", "SOLITAIRE", "Jimmy", "", "METAL", "", "GOLD", "18K", "Yellow"],
        3: ["GR-114", "", "", "", "", "", "", "", "DIAMOND", "LG", "MARQUISE", "vvs1", "teal", "5"]
    }

    let head = `<th class="w-[45px] h-[33px] bg-[#ededed] border-r border-[#ededed] p-0"><svg class="w-[10px] h-[10px] ml-[19px] mt-1" viewBox="0 0 10 10"><path d="M10 0v10H0z" fill="#666"/></svg></th>`
    letters.forEach((l) => {
        head += l == "O"
            ? `<th class="w-[104px] h-[33px] p-0 pt-[2px] font-normal bg-[#d9d9d9] text-[#047d6c] border-b-2 border-[#3f9020]">${l}</th>`
            : `<th class="w-[104px] h-[33px] p-0 pt-[2px] font-normal bg-[#ededed] text-[#555] border-b border-r border-[#d4d4d4]">${l}</th>`
    })
    document.getElementById("cols").innerHTML = head

    let body = ""
    for (let r = 1; r <= 20; r++) {
        body += r == 6
            ? `<tr><th class="h-[29px] p-0 pt-[2px] font-normal bg-[#d9d9d9] text-[#047d6c] border-r-2 border-b border-r-[#3f9020] border-b-[#d4d4d4]">${r}</th>`
            : `<tr><th class="h-[29px] p-0 pt-[2px] font-normal bg-[#ededed] text-[#555] border-r border-b border-[#d4d4d4]">${r}</th>`
        letters.forEach((l, c) => {
            const text = (cells[r] || [])[c] || ""
            if (r == 6 && l == "O") {
                // active cell with its fill handle
                body += `<td class="relative h-[29px] p-0 border-r border-b border-[#e0e0e0]"><span class="absolute -inset-[2px] border-[3px] border-b-2 border-[#3f9020]"></span><span class="absolute -right-[3px] bottom-0 w-[5px] h-[3px] bg-[#3f9020] border-t border-l border-white"></span></td>`
            } else {
                body += text == "5"
                    ? `<td class="h-[29px] p-0 pt-[2px] pr-1 text-right overflow-hidden whitespace-nowrap border-r border-b border-[#e0e0e0]">${text}</td>`
                    : `<td class="h-[29px] p-0 pt-[2px] pl-[3px] overflow-hidden whitespace-nowrap border-r border-b border-[#e0e0e0]">${text}</td>`
            }
        })
        body += "</tr>"
    }
    document.getElementById("rows").innerHTML = body
</script>

</html>
